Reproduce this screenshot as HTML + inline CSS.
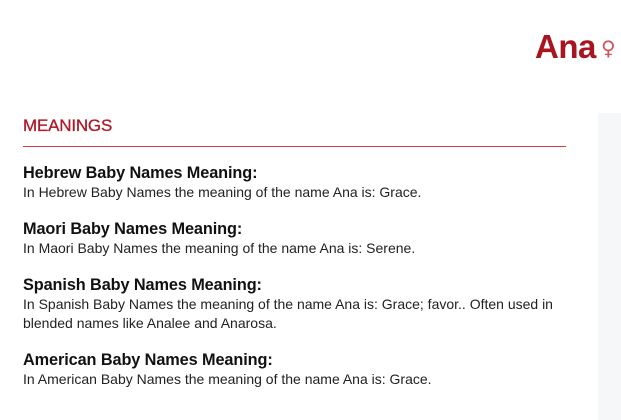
<!DOCTYPE html>
<html><head><style>
body{margin:0;width:621px;height:420px;background:#fff;position:relative;overflow:hidden;font-family:"Liberation Sans",sans-serif}
.t{position:absolute;left:535px;top:28px;font-size:33px;font-weight:bold;color:#a8141f;letter-spacing:-0.5px}
.g{position:absolute;left:601px;top:36px;font-size:20px;color:#d0545e;font-family:"DejaVu Sans",sans-serif}
.side{position:absolute;left:598px;top:113px;width:23px;height:307px;background:#f6f7f9}
.m{position:absolute;left:23px;top:116px;font-size:17px;color:#b0182a;-webkit-text-stroke:0.3px #b0182a;letter-spacing:-0.2px}
.line{position:absolute;left:23px;top:146px;width:543px;height:1px;background:#d03a44}
.s{position:absolute;left:23px;width:548px}
.s b{display:block;font-size:16.3px;color:#111;line-height:18px;letter-spacing:-0.1px}
.s p{margin:1px 0 0;font-size:14px;color:#222;line-height:19px}
</style></head><body>
<div class="t">Ana</div><div class="g">♀</div>
<div class="side"></div>
<div class="m">MEANINGS</div>
<div class="line"></div>
<div class="s" style="top:164px"><b>Hebrew Baby Names Meaning:</b><p>In Hebrew Baby Names the meaning of the name Ana is: Grace.</p></div>
<div class="s" style="top:220px"><b>Maori Baby Names Meaning:</b><p>In Maori Baby Names the meaning of the name Ana is: Serene.</p></div>
<div class="s" style="top:276px"><b>Spanish Baby Names Meaning:</b><p>In Spanish Baby Names the meaning of the name Ana is: Grace; favor.. Often used in blended names like Analee and Anarosa.</p></div>
<div class="s" style="top:351px"><b>American Baby Names Meaning:</b><p>In American Baby Names the meaning of the name Ana is: Grace.</p></div>
</body></html>
